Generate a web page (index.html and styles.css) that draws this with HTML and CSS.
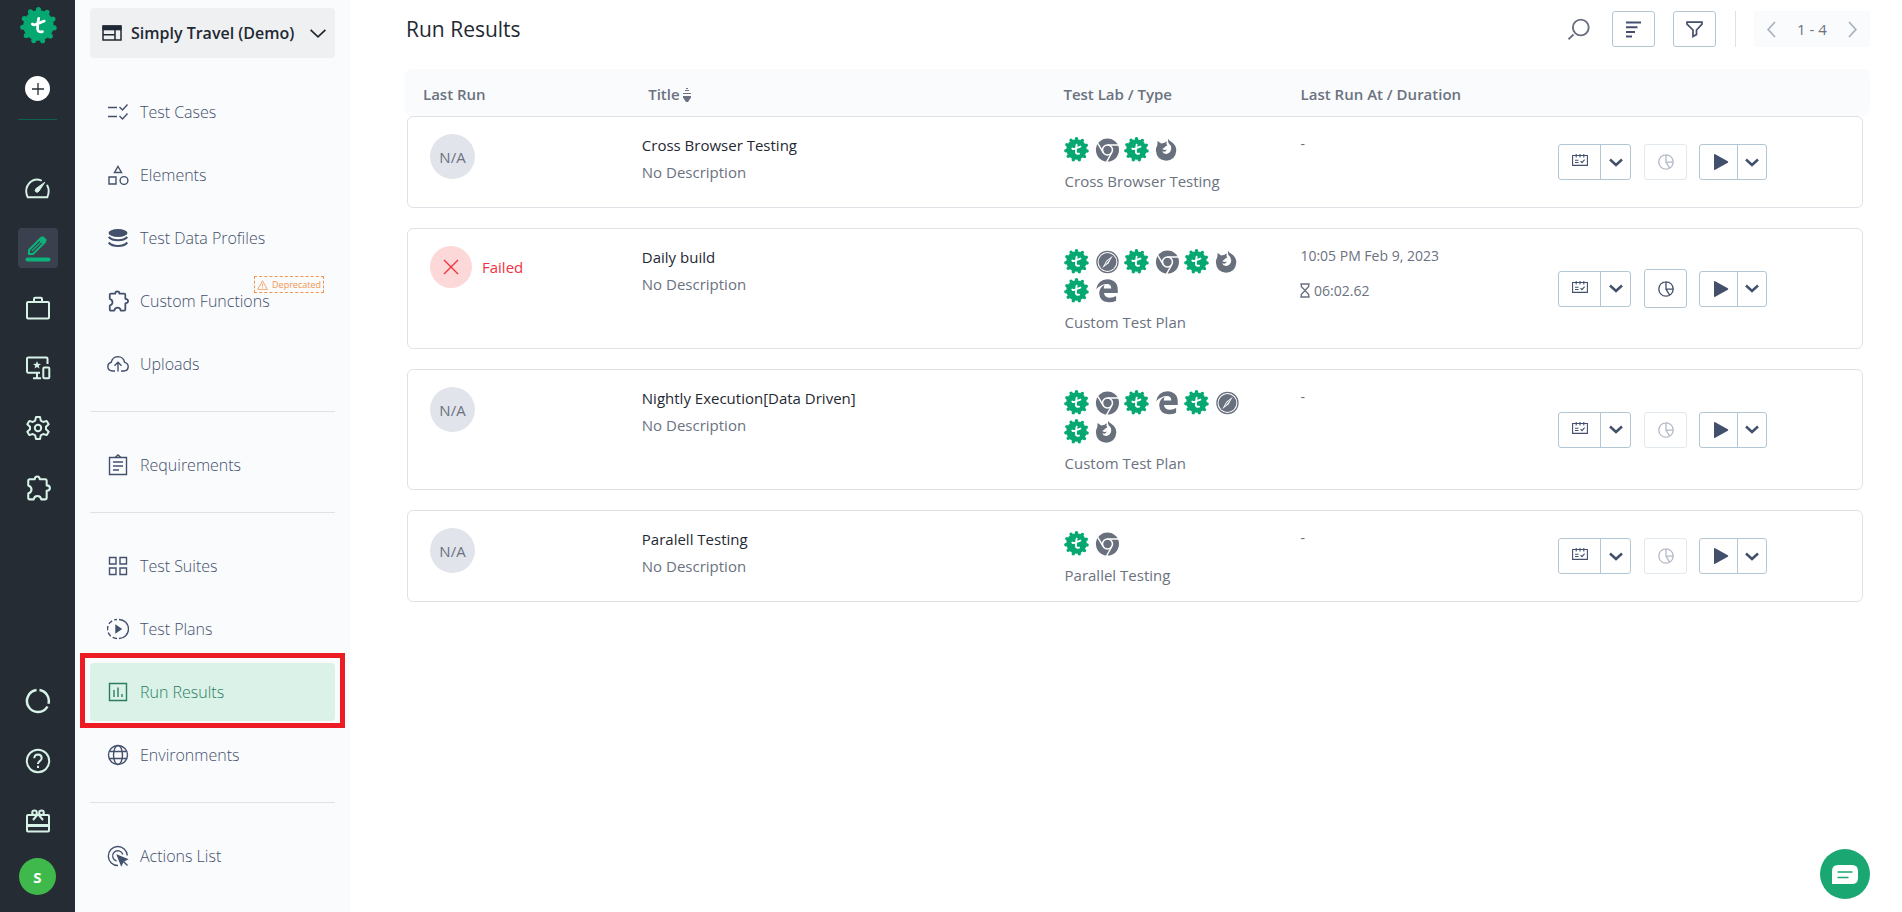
FILE: index.html
```html
<!DOCTYPE html>
<html lang="en">
<head>
    <meta charset="UTF-8">
    <meta name="viewport" content="width=device-width, initial-scale=1.0">
    <title>Run Results</title>
    <link rel="stylesheet" href="styles.css">
</head>
<body>
    <!-- Icon sprite -->
    <svg class="sprite" aria-hidden="true">
        <symbol id="badge" viewBox="0 0 36 36">
            <circle cx="18" cy="18" r="14.8" fill="#05a870"/>
            <circle cx="18" cy="18" r="15.4" fill="none" stroke="#05a870" stroke-width="5" stroke-linecap="round" stroke-dasharray="0 8.796" transform="rotate(-90 18 18)"/>
            <path d="M18.2 11q-1.400 7-1 11 .4 2.800 4.600 2M12 16.600q1.300 1.400 3.600.3l8-3.200" fill="none" stroke="#fff" stroke-width="2.700" stroke-linecap="round"/>
        </symbol>
        <symbol id="chrome" viewBox="0 0 26 26">
            <circle cx="14" cy="13.5" r="12" fill="#69707d"/>
            <circle cx="14" cy="13.5" r="5.200" fill="#69707d" stroke="#fff" stroke-width="1.600"/>
            <path d="M14 8.300h12M9.500 16.100 3.600 6M18.500 16.100 13 26" stroke="#fff" stroke-width="1.500" fill="none"/>
        </symbol>
        <symbol id="firefox" viewBox="0 0 26 26">
            <path d="M3.700 4.200 7.500 6.800q2-.9 3-.5l2.700-2-.2 2.900.8 1.600q-2.600.6-3.200 2.500l-2 1.200q2.200 1.600 4.600.6-.2 2.200-2.500 2.300l-2.200-.5q1 2.900 4.500 2.700 4.300-.8 4.900-5.400.1-3.800-2.700-5.700-1-2.200-.6-4.700 1.200 2 3 2.900l.7.4Q23.200 8.500 23.200 14q-.8 10-10.700 10.700Q2.700 24 2 14.400q-.1-3.600 1.500-6.200z" fill="#69707d"/>
        </symbol>
        <symbol id="edge" viewBox="0 0 26 26">
            <path d="M2.200 11.800Q4 1.700 14 1.300 25 2 24.700 13v2.500H10.300q.8 4.900 6.200 5 3.700 0 6.500-1.800v4.900q-3.600 1.900-8 1.600-9.400-1-9.600-9.700.3-5.700 5.700-8.400-.8 1.300-1 3.900h7.800q.2-4.700-4.400-4.800-6.400.1-11.300 5.600z" fill="#69707d"/>
        </symbol>
        <symbol id="safari" viewBox="0 0 26 26">
            <circle cx="14" cy="13.500" r="11" fill="none" stroke="#69707d" stroke-width="1.300"/>
            <circle cx="14" cy="13.500" r="9.300" fill="#69707d"/>
            <path d="m19.500 7-4.300 7.800-6.700 5.200 4.300-7.800z" fill="#fff"/>
            <path d="m17.200 9.500-3 4.200-3.300 3.700 2.600-4.500z" fill="#69707d"/>
        </symbol>
        <symbol id="puzzle" viewBox="0 0 24 24">
            <path d="M3 5.300Q3 4 4.300 4H9q0-2.600 2.300-2.600T13.600 4H18.700Q20 4 20 5.300v4.300q3 .2 3 2.500t-3 2.500v6.600q0 1.300-1.300 1.300H15q-.5-3.200-3.500-3.200T8 22.500H4.300Q3 22.500 3 21.200V17q3-1 3-3.700T3 9.600z" fill="none" stroke="currentColor" stroke-width="1.900" stroke-linejoin="round"/>
        </symbol>
        <symbol id="calendar" viewBox="0 0 16 12">
            <path d="M.6 1.500h14.800v9.900H.6zM4.200 0v3.600M8 0v3.600M11.800 0v3.600M3 6.200h3.500M3 8.500h3.500M8.500 7.200l1.500 1.500 2.600-3" fill="none" stroke="currentColor" stroke-width="1.100"/>
        </symbol>
        <symbol id="caret" viewBox="0 0 14 9">
            <path d="m1 1.500 6 5.500 6-5.500" fill="none" stroke="currentColor" stroke-width="2.500"/>
        </symbol>
        <symbol id="pie" viewBox="0 0 16 16">
            <path d="M8 .8a7.200 7.200 0 1 0 0 14.400A7.200 7.200 0 1 0 8 .8v7.400h7.200M8 8.200l3.600 6" fill="none" stroke="currentColor" stroke-width="1.300"/>
        </symbol>
        <symbol id="play" viewBox="0 0 16 16">
            <path d="M1 .8Q1-.3 2.200.3l12.600 7q.9.7 0 1.400l-12.600 7Q1 16.300 1 15.200z" fill="currentColor"/>
        </symbol>
    </svg>

    <div class="app">
        <!-- Dark icon rail -->
        <nav class="rail" aria-label="Workspace">
            <a class="rail-logo" href="#" aria-label="Home"><svg width="37" height="37"><use href="#badge"/></svg></a>
            <button class="rail-add" type="button" aria-label="Create">
                <svg width="12" height="12" viewBox="0 0 12 12"><path d="M6 0v12M0 6h12" stroke="#262c34" stroke-width="1.300"/></svg>
            </button>
            <div class="rail-line"></div>
            <div class="rail-group">
                <a class="rail-link" href="#" aria-label="Dashboard">
                    <svg width="25" height="21" viewBox="0 0 25 21" fill="none" stroke="currentColor" stroke-width="1.900" stroke-linecap="round" stroke-linejoin="round"><path d="M16 2.300Q10.500.2 5.700 3.700 1 7.800 1.200 13.500q.2 3.300 1.500 5.800h19.600q2.800-6.500 0-11.800"/><path d="M19.500 4.500 11 10.600q-1.600 1.700-.3 3.100 1.600 1.300 3-.3z" fill="currentColor" stroke-width="1"/></svg>
                </a>
                <a class="rail-link rail-current" href="#" aria-label="Create tests">
                    <svg width="26" height="28" viewBox="0 0 26 28" fill="none" stroke="#0db17a"><path d="m4 16 12-12 4 4L8 20H4zM14.500 5.500l4 4" stroke-width="2"/><path d="m15.500 4.500 2.500-2.500 4 4-2.500 2.500z" fill="#0db17a" stroke="none"/><path d="M6.800 17 16 8" stroke-width="1.200"/><path d="M2.500 25.500h21" stroke-width="4" stroke-linecap="round"/></svg>
                </a>
                <a class="rail-link" href="#" aria-label="Projects">
                    <svg width="26" height="24" viewBox="0 0 26 24" fill="none" stroke="currentColor" stroke-width="2"><rect x="2" y="6" width="22" height="16.500" rx="1"/><path d="M9 6V3q0-1.200 1.200-1.200h5.600Q17 1.800 17 3v3"/></svg>
                </a>
                <a class="rail-link" href="#" aria-label="Devices">
                    <svg width="26" height="24" viewBox="0 0 26 24" fill="none" stroke="currentColor" stroke-width="2"><path d="M22.500 8V2.500q0-1-1-1h-18q-1.500 0-1.500 1v13q0 1.200 1.500 1.200H15M12 17v5M8 22.300h8"/><rect x="18.300" y="11.500" width="6" height="10.800" rx="1"/><path d="m12 5 1.100 2.800 2.900.1-2.300 1.900.8 2.800-2.500-1.600-2.500 1.600.8-2.800L8 7.900l2.900-.1z" fill="currentColor" stroke="none"/></svg>
                </a>
                <a class="rail-link" href="#" aria-label="Settings">
                    <svg width="26" height="26" viewBox="0 0 26 26" fill="none" stroke="currentColor" stroke-width="2" stroke-linejoin="round"><path d="M11 2h4l.8 3.600 2.400 1.400 3.500-1.100 2 3.400-2.700 2.500v2.400l2.700 2.500-2 3.400-3.500-1.100-2.400 1.400L15 24h-4l-.8-3.600L7.800 19l-3.500 1.100-2-3.400L5 14.200v-2.400L2.300 9.300l2-3.400L7.800 7l2.400-1.400z"/><circle cx="13" cy="13" r="3.200"/></svg>
                </a>
                <a class="rail-link" href="#" aria-label="Add-ons"><svg width="26" height="26"><use href="#puzzle"/></svg></a>
            </div>
            <div class="rail-group rail-bottom">
                <a class="rail-link" href="#" aria-label="Usage">
                    <svg width="26" height="26" viewBox="0 0 26 26" fill="none" stroke="currentColor" stroke-width="2.500"><path d="M14.500 2.100a11 11 0 0 1 9 13.600M22.500 18.500A11 11 0 1 1 11.500 2.100"/></svg>
                </a>
                <a class="rail-link" href="#" aria-label="Help">
                    <svg width="26" height="26" viewBox="0 0 26 26" fill="none" stroke="currentColor" stroke-width="2"><circle cx="13" cy="13" r="11.200"/><path d="M9.300 10.300q.1-3.600 3.700-3.700 3.600.1 3.700 3.400 0 1.700-2 3.100-1.700 1.200-1.700 3M13 17.800v2.300"/></svg>
                </a>
                <a class="rail-link" href="#" aria-label="What's new">
                    <svg width="26" height="24" viewBox="0 0 26 24" fill="none" stroke="currentColor" stroke-width="2"><rect x="2" y="6" width="22" height="16.500" rx="1"/><path d="M2 16.500h22" stroke-width="3"/><circle cx="9.500" cy="3.700" r="2.300"/><circle cx="16.500" cy="3.700" r="2.300"/><path d="m13 5-5 6M13 5l5 6"/></svg>
                </a>
            </div>
            <button class="avatar" type="button" aria-label="Account">S</button>
        </nav>

        <!-- Project sidebar -->
        <aside class="sidebar">
            <div class="project">
                <svg width="20" height="16" viewBox="0 0 20 16"><path d="M1 1h18v14H1zM1 9.700h12M13 4v11" fill="none" stroke="#1f2933" stroke-width="1.500"/><path d="M.5.5h19v4.800H.5z" fill="#1f2933"/></svg>
                <select aria-label="Project">
                    <option>Simply Travel (Demo)</option>
                </select>
                <svg class="project-caret" width="16" height="9" viewBox="0 0 16 9"><path d="m.6.8 7.400 7 7.400-7" fill="none" stroke="#1f2933" stroke-width="1.700"/></svg>
            </div>
            <nav class="menu" aria-label="Project menu">
                <a class="menu-item" href="#">
                    <svg viewBox="0 0 22 22"><path d="M1 6.500h9M1 15.500h9M12.500 6l3 3 5-5.500M12.500 15l3 3 5-5.500"/></svg>Test Cases</a>
                <a class="menu-item" href="#">
                    <svg viewBox="0 0 22 22"><path d="M11 2.500 14.500 8.500h-7zM2 13h7v7H2z"/><circle cx="17" cy="16.500" r="3.900"/></svg>Elements</a>
                <a class="menu-item" href="#">
                    <svg viewBox="0 0 22 22"><ellipse cx="11" cy="6" rx="9.500" ry="4" fill="currentColor" stroke="none"/><path d="M1.700 10q3 3.200 9.300 3.200t9.300-3.200M1.700 15.500q3 3.500 9.300 3.500t9.300-3.500" stroke-width="2"/></svg>Test Data Profiles</a>
                <a class="menu-item" href="#">
                    <svg><use href="#puzzle"/></svg>Custom Functions
                    <span class="deprecated"><svg viewBox="0 0 11 10"><path d="M5.500.8 10.400 9.400H.6zM5.500 3.500v3M5.500 7.300v1" stroke-width=".8"/></svg>Deprecated</span></a>
                <a class="menu-item" href="#">
                    <svg viewBox="0 0 22 22"><path d="M8 18H5.500Q1 17.600.8 13.500 1 10 4.300 9.200 5.500 3.800 10.700 3.600q5.800.1 6.900 5.800 3.500.8 3.600 4.200-.2 4.100-4.400 4.400H14M11 18.500V9.500M7.500 12.700 11 9.200l3.500 3.500"/></svg>Uploads</a>
                <hr>
                <a class="menu-item" href="#">
                    <svg viewBox="0 0 22 22"><path d="M2.500 3.500h17v17h-17zM8 3.500 11 1l3 2.500zM6 8h10M6 12h10M6 16h6"/></svg>Requirements</a>
                <hr>
                <a class="menu-item" href="#">
                    <svg viewBox="0 0 22 22"><path d="M2.500 2.500H9V9H2.500zM13 2.500h6.500V9H13zM2.500 13H9v6.500H2.500zM13 13h6.500v6.500H13z"/></svg>Test Suites</a>
                <a class="menu-item" href="#">
                    <svg viewBox="0 0 22 22"><path d="M12 1.500a9.500 9.500 0 0 1 0 19"/><path d="M10 20.500a9.500 9.500 0 0 1 0-19" stroke-dasharray="4.500 2.200"/><path d="M9 7.500v7l5-3.500z" fill="currentColor"/></svg>Test Plans</a>
                <a class="menu-item menu-active" href="#" aria-current="page">
                    <svg viewBox="0 0 22 22"><path d="M2.500 2.500h17v17h-17zM7 9v7M11 6.500V16M15 13v3"/></svg>Run Results</a>
                <a class="menu-item" href="#">
                    <svg viewBox="0 0 22 22"><circle cx="11" cy="11" r="9.500"/><ellipse cx="11" cy="11" rx="4.500" ry="9.500"/><path d="M2.500 7.500h17M2.500 14.500h17"/></svg>Environments</a>
                <hr>
                <a class="menu-item" href="#">
                    <svg viewBox="0 0 22 22"><path d="M20.300 10.500A9.500 9.500 0 1 0 11 20.500M15.800 9.500A5.200 5.200 0 1 0 9.500 16M15 15l5.500 5.500"/><path d="m10.500 10.500 9.500 3.800-3.800 1.900-1.900 3.800z" fill="currentColor"/></svg>Actions List</a>
            </nav>
        </aside>

        <!-- Run results list -->
        <main class="content">
            <header class="toolbar">
                <h1>Run Results</h1>
                <button class="search" type="button" aria-label="Search">
                    <svg width="22" height="22" viewBox="0 0 22 22" fill="none" stroke="currentColor" stroke-width="1.900"><circle cx="12.800" cy="9.500" r="7.900"/><path d="m5.500 16.500-5 4.800"/></svg>
                </button>
                <button class="btn" type="button" aria-label="Sort">
                    <svg width="15" height="17" viewBox="0 0 15 17"><path d="M0 1.500h15M0 6.200h11.500M0 10.900h9M0 15.600h6" stroke="currentColor" stroke-width="2"/></svg>
                </button>
                <button class="btn" type="button" aria-label="Filter">
                    <svg width="17" height="17" viewBox="0 0 17 17"><path d="M1 1.200h15v2L10.500 9v4.500l-3.500 2V9L1 3.200z" fill="none" stroke="currentColor" stroke-width="1.700"/></svg>
                </button>
                <div class="pager">
                    <button type="button" aria-label="Previous page"><svg width="9" height="17" viewBox="0 0 9 17"><path d="M8 1 1.200 8.500 8 16" fill="none" stroke="currentColor" stroke-width="1.800"/></svg></button>
                    <span>1 - 4</span>
                    <button type="button" aria-label="Next page"><svg width="9" height="17" viewBox="0 0 9 17"><path d="m1 1 6.800 7.500L1 16" fill="none" stroke="currentColor" stroke-width="1.800"/></svg></button>
                </div>
            </header>

            <table class="results">
                <thead>
                    <tr>
                        <th>Last Run</th>
                        <th>Title <svg width="8" height="14" viewBox="0 0 8 14"><path d="M3 .5h2M2 2.500h4M0 5.500h8" stroke="currentColor" stroke-width="1"/><path d="M0 8h8v1.500L5 14H3L0 9.500z" fill="currentColor"/></svg></th>
                        <th>Test Lab / Type</th>
                        <th>Last Run At / Duration</th>
                        <th aria-label="Actions"></th>
                    </tr>
                </thead>
                <tbody>
                    <tr>
                        <td class="status"><span class="na">N/A</span></td>
                        <td class="name"><strong>Cross Browser Testing</strong><span>No Description</span></td>
                        <td class="lab">
                            <div class="lab-icons">
                                <svg><use href="#badge"/></svg><svg><use href="#chrome"/></svg><svg><use href="#badge"/></svg><svg><use href="#firefox"/></svg>
                            </div>
                            <span>Cross Browser Testing</span>
                        </td>
                        <td class="time"><span>-</span></td>
                        <td class="actions">
                            <div class="split"><button type="button" aria-label="Schedule"><svg class="i-cal"><use href="#calendar"/></svg></button><button type="button" aria-label="Schedule options"><svg class="i-caret"><use href="#caret"/></svg></button></div>
                            <button class="btn" type="button" aria-label="Report" disabled><svg class="i-pie"><use href="#pie"/></svg></button>
                            <div class="split split-run"><button type="button" aria-label="Run"><svg class="i-play"><use href="#play"/></svg></button><button type="button" aria-label="Run options"><svg class="i-caret"><use href="#caret"/></svg></button></div>
                        </td>
                    </tr>
                    <tr>
                        <td class="status"><span class="failed"><svg width="16" height="16" viewBox="0 0 16 16"><path d="m1 1 14 14M15 1 1 15" stroke="currentColor" stroke-width="1.400"/></svg></span><span class="failed-text">Failed</span></td>
                        <td class="name"><strong>Daily build</strong><span>No Description</span></td>
                        <td class="lab">
                            <div class="lab-icons">
                                <svg><use href="#badge"/></svg><svg><use href="#safari"/></svg><svg><use href="#badge"/></svg><svg><use href="#chrome"/></svg><svg><use href="#badge"/></svg><svg><use href="#firefox"/></svg>
                                <svg><use href="#badge"/></svg><svg><use href="#edge"/></svg>
                            </div>
                            <span>Custom Test Plan</span>
                        </td>
                        <td class="time">
                            <span>10:05 PM Feb 9, 2023</span>
                            <span><svg width="10" height="15" viewBox="0 0 10 15"><path d="M.3 1h9.400M.3 14h9.400M1.300 1v2.500L8.700 11.500V14M8.700 1v2.500L1.300 11.500V14" fill="none" stroke="currentColor" stroke-width="1.400"/></svg> 06:02.62</span>
                        </td>
                        <td class="actions">
                            <div class="split"><button type="button" aria-label="Schedule"><svg class="i-cal"><use href="#calendar"/></svg></button><button type="button" aria-label="Schedule options"><svg class="i-caret"><use href="#caret"/></svg></button></div>
                            <button class="btn btn-report" type="button" aria-label="Report"><svg class="i-pie"><use href="#pie"/></svg></button>
                            <div class="split split-run"><button type="button" aria-label="Run"><svg class="i-play"><use href="#play"/></svg></button><button type="button" aria-label="Run options"><svg class="i-caret"><use href="#caret"/></svg></button></div>
                        </td>
                    </tr>
                    <tr>
                        <td class="status"><span class="na">N/A</span></td>
                        <td class="name"><strong>Nightly Execution[Data Driven]</strong><span>No Description</span></td>
                        <td class="lab">
                            <div class="lab-icons">
                                <svg><use href="#badge"/></svg><svg><use href="#chrome"/></svg><svg><use href="#badge"/></svg><svg><use href="#edge"/></svg><svg><use href="#badge"/></svg><svg><use href="#safari"/></svg>
                                <svg><use href="#badge"/></svg><svg><use href="#firefox"/></svg>
                            </div>
                            <span>Custom Test Plan</span>
                        </td>
                        <td class="time"><span>-</span></td>
                        <td class="actions">
                            <div class="split"><button type="button" aria-label="Schedule"><svg class="i-cal"><use href="#calendar"/></svg></button><button type="button" aria-label="Schedule options"><svg class="i-caret"><use href="#caret"/></svg></button></div>
                            <button class="btn" type="button" aria-label="Report" disabled><svg class="i-pie"><use href="#pie"/></svg></button>
                            <div class="split split-run"><button type="button" aria-label="Run"><svg class="i-play"><use href="#play"/></svg></button><button type="button" aria-label="Run options"><svg class="i-caret"><use href="#caret"/></svg></button></div>
                        </td>
                    </tr>
                    <tr>
                        <td class="status"><span class="na">N/A</span></td>
                        <td class="name"><strong>Paralell Testing</strong><span>No Description</span></td>
                        <td class="lab">
                            <div class="lab-icons">
                                <svg><use href="#badge"/></svg><svg><use href="#chrome"/></svg>
                            </div>
                            <span>Parallel Testing</span>
                        </td>
                        <td class="time"><span>-</span></td>
                        <td class="actions">
                            <div class="split"><button type="button" aria-label="Schedule"><svg class="i-cal"><use href="#calendar"/></svg></button><button type="button" aria-label="Schedule options"><svg class="i-caret"><use href="#caret"/></svg></button></div>
                            <button class="btn" type="button" aria-label="Report" disabled><svg class="i-pie"><use href="#pie"/></svg></button>
                            <div class="split split-run"><button type="button" aria-label="Run"><svg class="i-play"><use href="#play"/></svg></button><button type="button" aria-label="Run options"><svg class="i-caret"><use href="#caret"/></svg></button></div>
                        </td>
                    </tr>
                </tbody>
            </table>
        </main>
    </div>

    <button class="chat" type="button" aria-label="Open chat">
        <svg width="26" height="19" viewBox="0 0 26 19"><path d="M0 19V6q0-6 6-6h14q6 0 6 6v7q0 6-6 6z" fill="#fff"/><path d="M6 7h14M6 12.500h10" stroke="#1aa772" stroke-width="1.300" stroke-linecap="round"/></svg>
    </button>
</body>
</html>
```
FILE: styles.css
```css
* {
    box-sizing: border-box;
}
body {
    margin: 0;
    font-family: "Open Sans", "Noto Sans", sans-serif;
    font-size: 15px;
    color: #6b7280;
    background-color: #fff;
}
button {
    display: flex;
    align-items: center;
    justify-content: center;
    padding: 0;
    border: none;
    background: none;
    font-family: inherit;
    color: #43506c;
    cursor: pointer;
}
a {
    color: inherit;
    text-decoration: none;
}
svg {
    flex: none;
}
.sprite {
    display: none;
}
.app {
    display: flex;
    min-height: 100vh;
}

/* Icon rail */
.rail {
    display: flex;
    flex-direction: column;
    align-items: center;
    flex: none;
    width: 75px;
    padding: 7px 0 17px;
    background-color: #262c34;
    color: #d7f3e7;
}
.rail-logo {
    display: flex;
    padding-left: 2px;
}
.rail-add {
    width: 25px;
    height: 25px;
    margin-top: 32px;
    border-radius: 50%;
    background-color: #fff;
}
.rail-line {
    width: 39px;
    height: 1px;
    margin: 18px 0 48px;
    background-color: #0b6149;
}
.rail-group {
    display: flex;
    flex-direction: column;
    gap: 20px;
}
.rail-link {
    display: flex;
    align-items: center;
    justify-content: center;
    width: 40px;
    height: 40px;
    border-radius: 4px;
}
.rail-current {
    background-color: #3a404d;
}
.rail-bottom {
    margin-top: auto;
}
.avatar {
    width: 37px;
    height: 37px;
    margin-top: 17px;
    border-radius: 50%;
    background-color: #3fb94b;
    color: #fff;
    font-size: 15px;
    font-weight: 700;
}

/* Sidebar */
.sidebar {
    flex: none;
    width: 275px;
    padding: 8px 15px;
    background-color: #fafbfd;
}
.project {
    display: flex;
    align-items: center;
    height: 50px;
    padding: 0 9px 0 12px;
    border-radius: 4px;
    background-color: #eff0f2;
}
.project select {
    flex: 1;
    min-width: 0;
    padding: 0 0 0 9px;
    border: none;
    background: none;
    appearance: none;
    font-family: inherit;
    font-size: 16px;
    font-weight: 600;
    color: #1f2933;
}
.menu {
    display: flex;
    flex-direction: column;
    gap: 5px;
    padding-top: 25px;
}
.menu hr {
    width: 100%;
    height: 1px;
    margin: 13px 0 19px;
    border: none;
    background-color: #dfe1e7;
}
.menu-item {
    position: relative;
    display: flex;
    align-items: center;
    gap: 11px;
    height: 58px;
    padding-left: 17px;
    border-radius: 4px;
    font-size: 16px;
    font-weight: 300;
    color: #43506c;
}
.menu-item > svg {
    width: 22px;
    height: 22px;
    fill: none;
    stroke: currentColor;
    stroke-width: 1.4;
}
.menu-active {
    background-color: #daf2e8;
    color: #2b7d62;
}
.menu-active::after {
    content: "";
    position: absolute;
    inset: -10px -10px -7px;
    border: 5px solid #ed1c24;
}
.deprecated {
    position: absolute;
    top: 4px;
    right: 11px;
    display: flex;
    align-items: center;
    gap: 4px;
    height: 17px;
    padding: 0 2px;
    border: 1px dashed #f3954f;
    font-size: 9px;
    font-weight: 500;
    color: #f3954f;
}
.deprecated svg {
    width: 11px;
    height: 10px;
    fill: none;
    stroke: currentColor;
}

/* Toolbar */
.content {
    flex: 1;
    min-width: 0;
    padding: 11px 32px 32px 55px;
}
.toolbar {
    display: flex;
    align-items: center;
    height: 36px;
    margin-bottom: 22px;
    padding-left: 1px;
}
.toolbar h1 {
    flex: 1;
    margin: 0;
    font-size: 21px;
    font-weight: 500;
    color: #1f2933;
}
.search {
    margin-right: 22px;
    color: #69707d;
}
.btn {
    width: 43px;
    height: 36px;
    border: 1px solid #b3c6d3;
    border-radius: 3px;
}
.btn-report {
    height: 39px;
}
.btn:disabled {
    border-color: #e1e8ee;
    color: #b4bac6;
    cursor: default;
}
.toolbar .btn {
    margin-right: 18px;
}
.pager {
    display: flex;
    align-items: center;
    justify-content: space-between;
    position: relative;
    width: 116px;
    height: 36px;
    margin-left: 20px;
    padding: 0 13px;
    border-radius: 3px;
    background-color: #fafbfd;
}
.pager::before {
    content: "";
    position: absolute;
    left: -19px;
    width: 1px;
    height: 36px;
    background-color: #dfe1e7;
}
.pager button {
    color: #a9b2bf;
}

/* Results table, each row drawn as a card */
.results,
.results thead,
.results tbody {
    display: block;
}
.results tr {
    display: grid;
    grid-template-columns: 234fr 422fr 237fr 258fr 304fr;
}
.results th,
.results td {
    padding: 0;
    text-align: left;
}
.results thead tr {
    align-items: center;
    height: 47px;
    padding: 2px 7px 0 2px;
    border-radius: 6px;
    background-color: #fafbfd;
}
.results th {
    font-size: 15px;
    font-weight: 600;
}
.results th svg {
    vertical-align: -2px;
}
.results th:nth-child(1) {
    padding-left: 16px;
}
.results th:nth-child(2) {
    padding-left: 7px;
}
.results tbody tr {
    margin: 0 7px 20px 2px;
    border: 1px solid #e0e2e8;
    border-radius: 6px;
}
.status {
    display: flex;
    align-items: flex-start;
}
.results .status {
    padding: 17px 0 0 22px;
}
.na,
.failed {
    display: flex;
    align-items: center;
    justify-content: center;
    width: 45px;
    height: 45px;
    border-radius: 50%;
    background-color: #e1e4eb;
}
.failed {
    width: 42px;
    height: 42px;
    background-color: #fdd8d8;
    color: #ef3340;
}
.failed-text {
    padding-left: 10px;
    line-height: 42px;
    color: #ef3340;
}
.name span,
.name strong {
    display: block;
    line-height: 27px;
}
.results .name {
    padding-top: 15px;
}
.name strong {
    font-weight: 500;
    color: #1f2933;
}
.results .lab {
    padding: 20px 0 11px;
}
.lab-icons {
    display: grid;
    grid-template-columns: repeat(6, 30px);
    grid-auto-rows: 29px;
}
.lab-icons svg {
    width: 25px;
    height: 25px;
}
.lab span {
    display: block;
    padding-left: 1px;
    line-height: 30px;
}
.results .time {
    padding-top: 13px;
    font-size: 14px;
}
.time span {
    display: block;
    margin-bottom: 7px;
    line-height: 28px;
}
.time svg {
    vertical-align: -2px;
}
.actions {
    display: flex;
    align-items: center;
}
.actions > .btn {
    margin: 0 12px 0 13px;
}
.split {
    display: flex;
    height: 36px;
    border: 1px solid #b3c6d3;
    border-radius: 3px;
}
.split button {
    width: 29px;
}
.split button:first-child {
    width: 42px;
    border-right: 1px solid #b3c6d3;
}
.split-run button:first-child {
    width: 38px;
}
.split-run button {
    width: 28px;
}
.i-cal {
    width: 16px;
    height: 12px;
    margin-bottom: 4px;
}
.i-caret {
    width: 14px;
    height: 9px;
}
.i-pie {
    width: 16px;
    height: 16px;
}
.i-play {
    width: 16px;
    height: 16px;
    margin-left: 4px;
}

/* Chat launcher */
.chat {
    position: fixed;
    right: 32px;
    bottom: 13px;
    width: 50px;
    height: 50px;
    border-radius: 50%;
    background-color: #1aa772;
}
```
